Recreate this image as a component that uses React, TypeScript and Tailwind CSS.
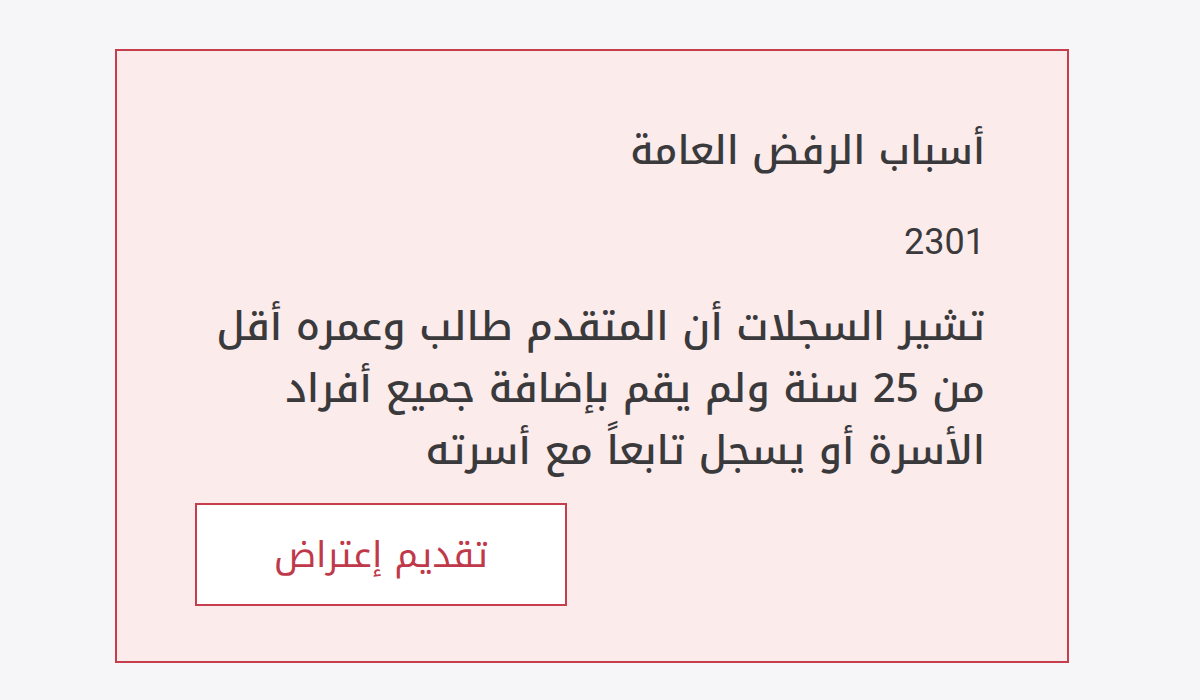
export default function App() {
  return (
    <div className="min-h-[700px] w-[1200px] bg-[#f6f5f7] pt-[49px] font-['Noto_Kufi_Arabic','DejaVu_Sans',sans-serif]">
      <div
        dir="rtl"
        className="ml-[115px] h-[614px] w-[954px] border-2 border-[#c63e4c] bg-[#fcebeb] pt-[70px] pr-[82px] pl-[78px]"
      >
        <h2 className="text-[39px] leading-[60px] font-medium text-[#3a3a3c]">أسباب الرفض العامة</h2>
        <p className="mt-[41px] font-['Roboto',sans-serif] text-[36px] leading-[40px] text-[#3a3a3c]">2301</p>
        <div className="mt-[34px] flex flex-col text-[40px] leading-[62px] font-medium text-[#3a3a3c]">
          <span>تشير السجلات أن المتقدم طالب وعمره أقل</span>
          <span>من 25 سنة ولم يقم بإضافة جميع أفراد</span>
          <span>الأسرة أو يسجل تابعاً مع أسرته</span>
        </div>
        <div className="mt-[21px] flex justify-end">
          <button className="flex h-[103px] w-[372px] items-center justify-center border-2 border-[#c63e4c] bg-white text-[36px] text-[#c0394a]">
            تقديم إعتراض
          </button>
        </div>
      </div>
    </div>
  );
}
